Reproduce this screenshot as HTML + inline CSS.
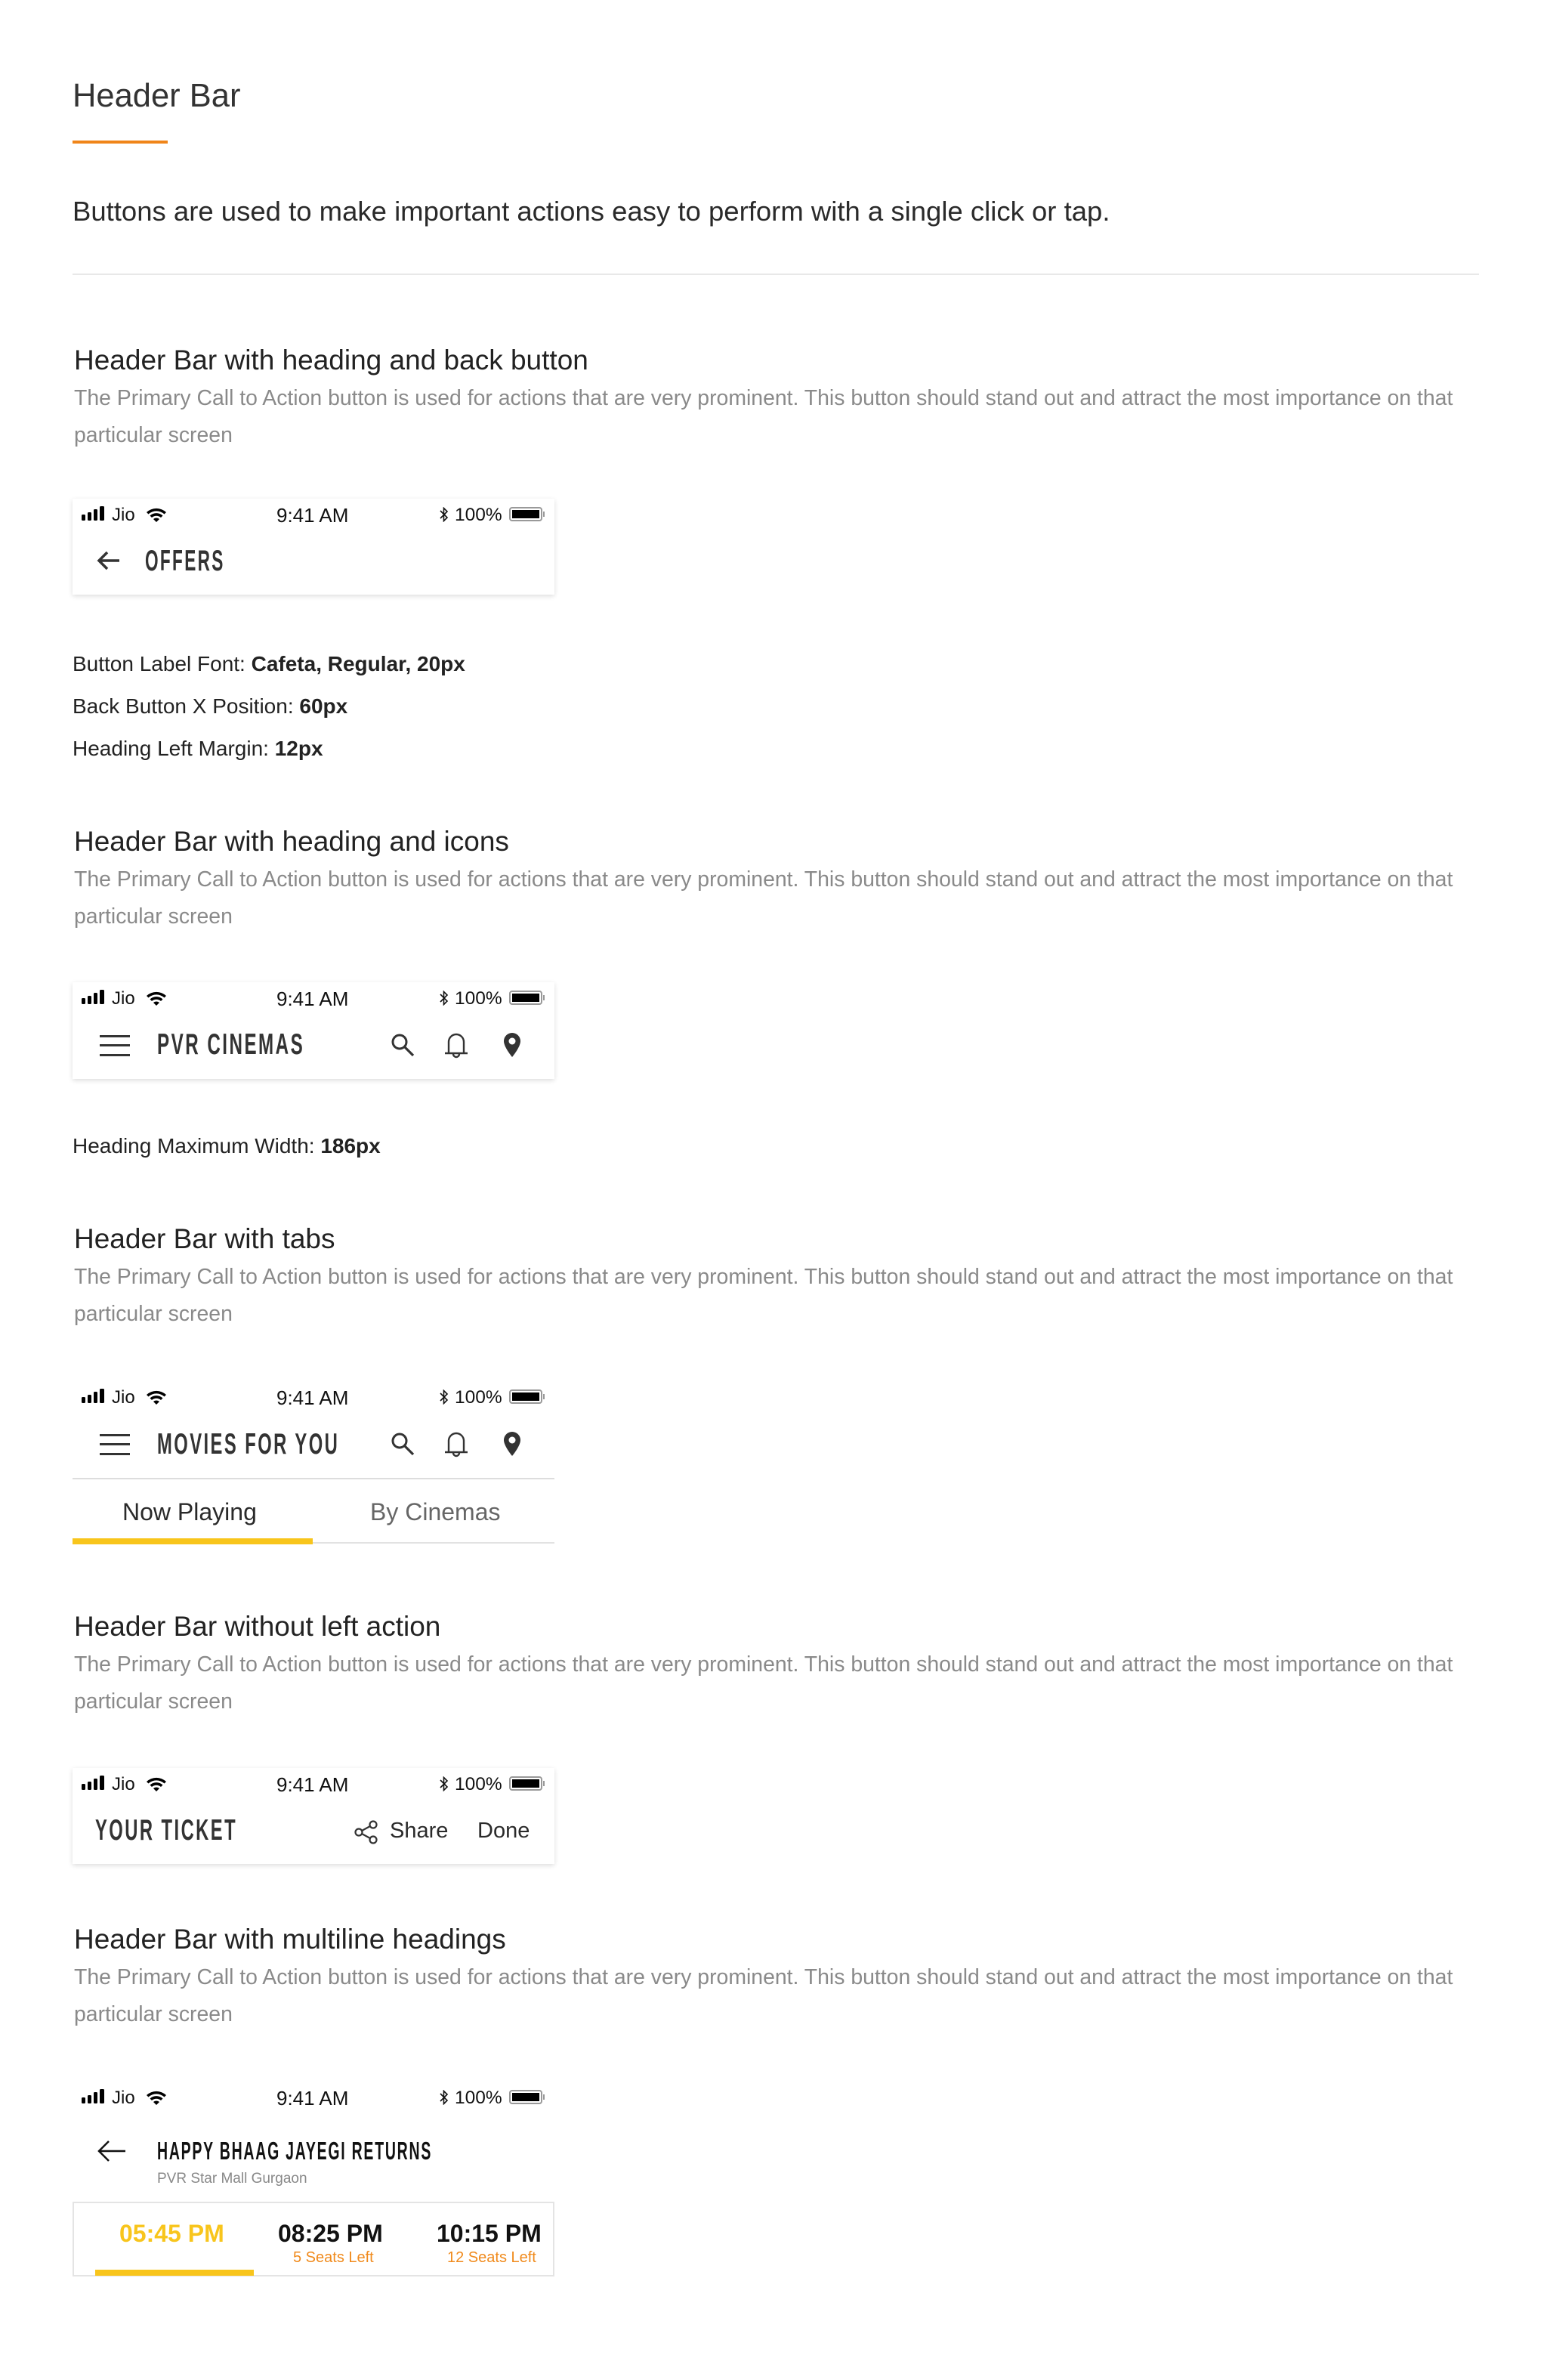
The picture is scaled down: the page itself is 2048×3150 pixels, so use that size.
<!DOCTYPE html>
<html><head><meta charset="utf-8"><style>
*{margin:0;padding:0;box-sizing:border-box}
body{width:2048px;height:3150px;background:#fff;position:relative;font-family:"Liberation Sans",sans-serif;color:#222;overflow:hidden}
.t{position:absolute;line-height:1;white-space:nowrap}
.h{font-size:37px;color:#222;left:98px}
.p{font-size:28.4px;color:#8a8a8a;left:98px}
.l{font-size:28px;color:#222;left:96px}
.card{position:absolute;left:96px;width:638px;background:#fff}
.sh{box-shadow:0 2px 6px rgba(0,0,0,.14)}
.c{display:inline-block;font-weight:bold;transform:scaleX(.6);transform-origin:left center;letter-spacing:4px;color:#333}
svg{position:absolute}
</style></head><body>

<div class="t" style="left:96px;top:106px;font-size:43.5px;color:#333">Header Bar</div>
<div style="position:absolute;left:96px;top:186px;width:126px;height:4px;background:#f08519"></div>
<div class="t" style="left:96px;top:262px;font-size:36.5px;color:#2a2a2a">Buttons are used to make important actions easy to perform with a single click or tap.</div>
<div style="position:absolute;left:96px;top:362px;width:1862px;height:2px;background:#e8e8e8"></div>

<div class="t h" style="top:458px">Header Bar with heading and back button</div>
<div class="t p" style="top:513px">The Primary Call to Action button is used for actions that are very prominent. This button should stand out and attract the most importance on that</div>
<div class="t p" style="top:562px">particular screen</div>

<div class="card sh" style="top:660px;height:127px">
 <div class="sb"></div>
 <svg style="left:30px;top:64px" width="36" height="36" viewBox="0 0 36 36"><path d="M32 18H5M16 7L5 18l11 11" fill="none" stroke="#333" stroke-width="3.5"/></svg>
 <div class="t" style="left:96px;top:63px;font-size:39px"><span class="c" style="transform:scaleX(.58)">OFFERS</span></div>
</div>

<div class="t l" style="top:865px">Button Label Font: <b>Cafeta, Regular, 20px</b></div>
<div class="t l" style="top:921px">Back Button X Position: <b>60px</b></div>
<div class="t l" style="top:977px">Heading Left Margin: <b>12px</b></div>

<div class="t h" style="top:1095px">Header Bar with heading and icons</div>
<div class="t p" style="top:1150px">The Primary Call to Action button is used for actions that are very prominent. This button should stand out and attract the most importance on that</div>
<div class="t p" style="top:1199px">particular screen</div>

<div class="card sh" style="top:1300px;height:128px">
 <div class="sb"></div>
 <div class="ham" style="top:70px"></div>
 <div class="t" style="left:112px;top:63px;font-size:39px"><span class="c" style="transform:scaleX(.62)">PVR CINEMAS</span></div>
 <div class="icons" style="top:66px"></div>
</div>

<div class="t l" style="top:1503px">Heading Maximum Width: <b>186px</b></div>

<div class="t h" style="top:1621px">Header Bar with tabs</div>
<div class="t p" style="top:1676px">The Primary Call to Action button is used for actions that are very prominent. This button should stand out and attract the most importance on that</div>
<div class="t p" style="top:1725px">particular screen</div>

<div class="card" style="top:1828px;height:216px">
 <div class="sb"></div>
 <div class="ham" style="top:70px"></div>
 <div class="t" style="left:112px;top:64px;font-size:39px"><span class="c" style="transform:scaleX(.61)">MOVIES FOR YOU</span></div>
 <div class="icons" style="top:66px"></div>
 <div style="position:absolute;left:0;top:128px;width:638px;height:2px;background:#ddd"></div>
 <div class="t" style="left:66px;top:157px;font-size:32px;color:#2a2a2a">Now Playing</div>
 <div class="t" style="left:394px;top:157px;font-size:32px;color:#666">By Cinemas</div>
 <div style="position:absolute;left:0;top:213px;width:638px;height:2px;background:#e2e2e2"></div>
 <div style="position:absolute;left:0;top:208px;width:318px;height:8px;background:#f8c51c"></div>
</div>

<div class="t h" style="top:2134px">Header Bar without left action</div>
<div class="t p" style="top:2189px">The Primary Call to Action button is used for actions that are very prominent. This button should stand out and attract the most importance on that</div>
<div class="t p" style="top:2238px">particular screen</div>

<div class="card sh" style="top:2340px;height:127px">
 <div class="sb"></div>
 <div class="t" style="left:30px;top:63px;font-size:39px"><span class="c" style="transform:scaleX(.61)">YOUR TICKET</span></div>
 <svg style="left:372px;top:68px" width="34" height="34" viewBox="0 0 34 34"><g fill="none" stroke="#333" stroke-width="2.2"><circle cx="7" cy="17" r="4.5"/><circle cx="26" cy="7" r="4.5"/><circle cx="26" cy="27" r="4.5"/><path d="M11 15l11-6M11 19l11 6"/></g></svg>
 <div class="t" style="left:420px;top:69px;font-size:29px;color:#2a2a2a">Share</div>
 <div class="t" style="left:536px;top:69px;font-size:29px;color:#2a2a2a">Done</div>
</div>

<div class="t h" style="top:2548px">Header Bar with multiline headings</div>
<div class="t p" style="top:2603px">The Primary Call to Action button is used for actions that are very prominent. This button should stand out and attract the most importance on that</div>
<div class="t p" style="top:2652px">particular screen</div>

<div class="card" style="top:2755px;height:260px">
 <div class="sb"></div>
 <svg style="left:32px;top:74px" width="40" height="36" viewBox="0 0 40 36"><path d="M38 18H4M16 5L3 18l13 13" fill="none" stroke="#111" stroke-width="2.5"/></svg>
 <div class="t" style="left:112px;top:75px;font-size:33px;color:#111"><span class="c" style="color:#111;letter-spacing:3px;transform:scaleX(.59)">HAPPY BHAAG JAYEGI RETURNS</span></div>
 <div class="t" style="left:112px;top:119px;font-size:19px;color:#888">PVR Star Mall Gurgaon</div>
 <div style="position:absolute;left:0;top:159px;width:638px;height:99px;border:2px solid #e4e4e4"></div>
 <div class="t" style="left:62px;top:185px;font-size:32px;font-weight:bold;color:#f8c51c">05:45 PM</div>
 <div class="t" style="left:272px;top:185px;font-size:32px;font-weight:bold;color:#111">08:25 PM</div>
 <div class="t" style="left:482px;top:185px;font-size:32px;font-weight:bold;color:#111">10:15 PM</div>
 <div class="t" style="left:292px;top:223px;font-size:20px;color:#f08a1c">5 Seats Left</div>
 <div class="t" style="left:496px;top:223px;font-size:20px;color:#f08a1c">12 Seats Left</div>
 <div style="position:absolute;left:30px;top:249px;width:210px;height:8px;background:#f8c51c"></div>
</div>

<template id="sbt">
 <svg style="left:12px;top:10px" width="32" height="20" viewBox="0 0 32 20"><rect x="0" y="11" width="5" height="8" rx="1.5"/><rect x="8" y="8" width="5" height="11" rx="1.5"/><rect x="16" y="4" width="5" height="15" rx="1.5"/><rect x="24" y="0" width="6" height="19" rx="1.5"/></svg>
 <div class="t" style="left:52px;top:10px;font-size:24px;color:#111">Jio</div>
 <svg style="left:97px;top:11px" width="28" height="20" viewBox="0 0 28 20"><path d="M1 7a19 19 0 0 1 26 0l-2.5 2.5a15.5 15.5 0 0 0-21 0z"/><path d="M5.5 11.5a12.5 12.5 0 0 1 17 0l-2.5 2.5a9 9 0 0 0-12 0z"/><path d="M10 16a6 6 0 0 1 8 0l-4 4z"/></svg>
 <div class="t" style="left:270px;top:9px;font-size:26px;color:#111">9:41 AM</div>
 <svg style="left:486px;top:11px" width="12" height="20" viewBox="0 0 12 20"><path d="M1 5l9 9-4.5 4.5V1.5L10 6 1 15" fill="none" stroke="#111" stroke-width="1.6"/></svg>
 <div class="t" style="left:506px;top:10px;font-size:24.5px;color:#111">100%</div>
 <div style="position:absolute;left:578px;top:11px;width:44px;height:19px;border:2px solid #999;border-radius:4px;padding:2px"><div style="width:100%;height:100%;background:#000"></div></div>
 <div style="position:absolute;left:623px;top:17px;width:2px;height:7px;background:#999"></div>
</template>
<template id="hamt">
 <div style="position:absolute;left:0;top:0;width:40px;height:3px;background:#333"></div>
 <div style="position:absolute;left:0;top:12px;width:40px;height:3px;background:#333"></div>
 <div style="position:absolute;left:0;top:25px;width:40px;height:3px;background:#333"></div>
</template>
<template id="ict">
 <svg style="left:0;top:0" width="36" height="36" viewBox="0 0 36 36"><circle cx="13" cy="13" r="9" fill="none" stroke="#333" stroke-width="3"/><path d="M20 20l11 11" stroke="#333" stroke-width="3.2"/></svg>
 <svg style="left:68px;top:-2px" width="40" height="40" viewBox="0 0 40 40"><path d="M10 29V15a10 10 0 0 1 20 0v14M5 30h30M16 31a4 4 0 0 0 8 0" fill="none" stroke="#333" stroke-width="2.4"/></svg>
 <svg style="left:150px;top:0" width="24" height="36" viewBox="0 0 24 36"><path d="M12 1a11 11 0 0 0-11 11c0 8 11 21 11 21s11-13 11-21A11 11 0 0 0 12 1z" fill="#333"/><circle cx="12" cy="12" r="4.5" fill="#fff"/></svg>
</template>
<script>
document.querySelectorAll('.sb').forEach(e=>{e.style.cssText='position:absolute;left:0;top:0;width:638px;height:44px';e.innerHTML=document.getElementById('sbt').innerHTML;});
document.querySelectorAll('.ham').forEach(e=>{e.style.position='absolute';e.style.left='36px';e.innerHTML=document.getElementById('hamt').innerHTML;});
document.querySelectorAll('.icons').forEach(e=>{e.style.position='absolute';e.style.left='420px';e.innerHTML=document.getElementById('ict').innerHTML;});
</script>
</body></html>
